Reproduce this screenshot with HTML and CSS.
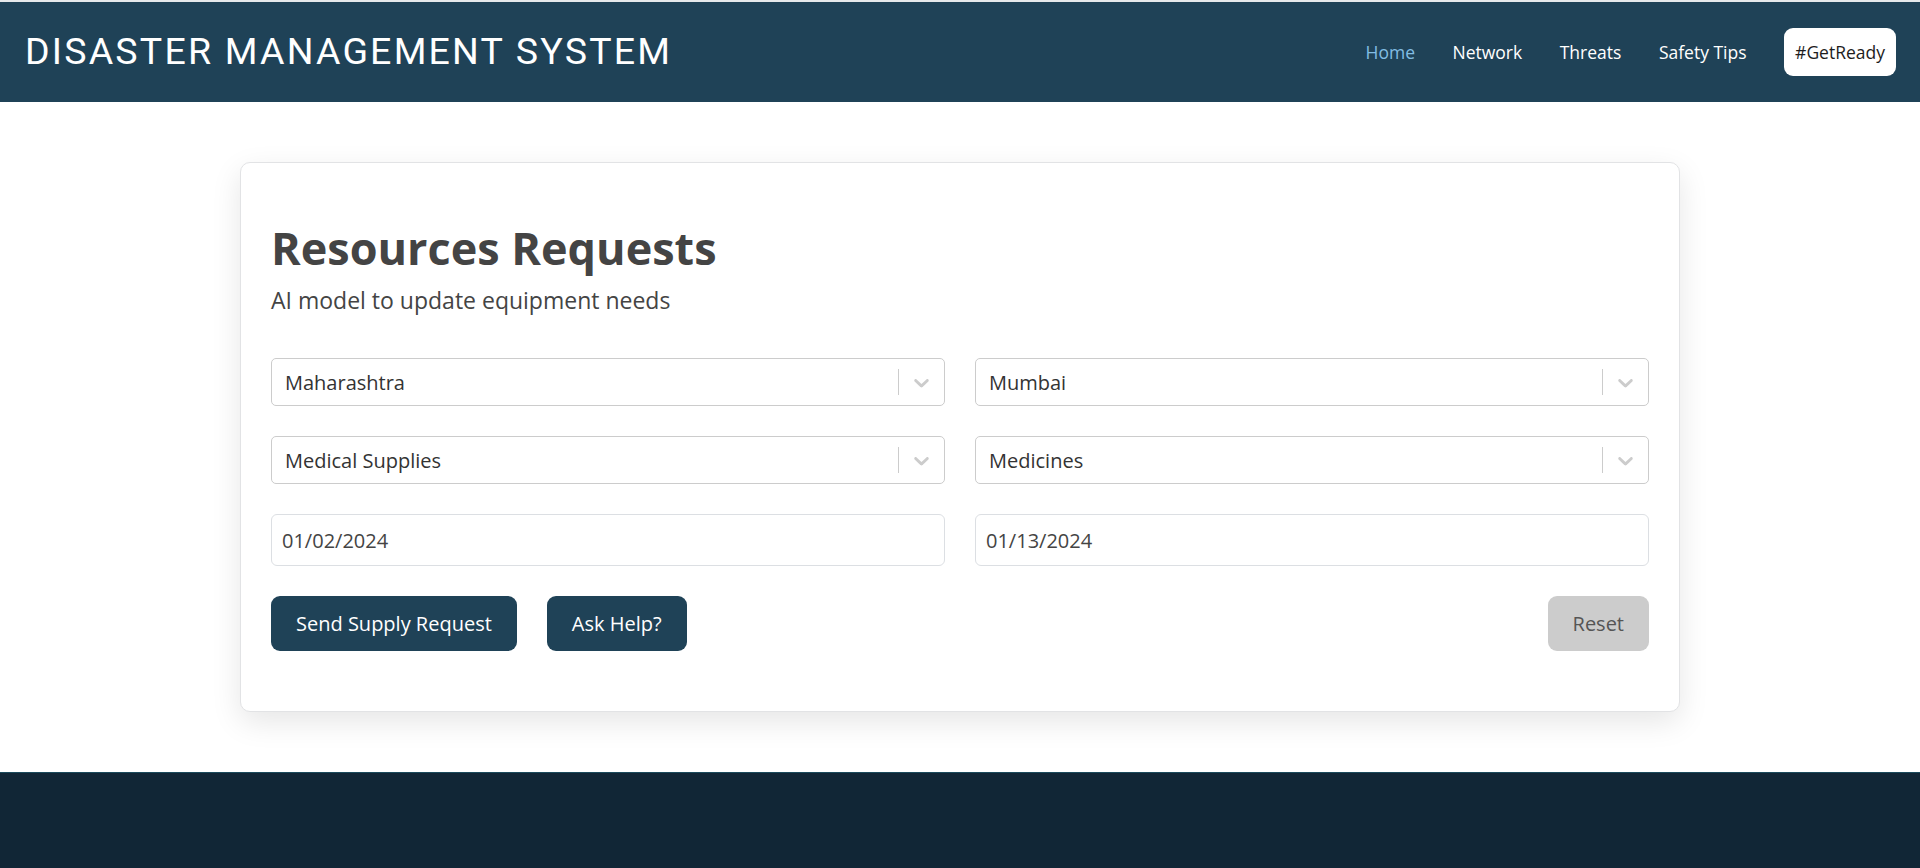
FILE: index.html
```html
<!DOCTYPE html>
<html lang="en">
<head>
<meta charset="utf-8">
<title>Disaster Management System</title>
<link rel="stylesheet" href="styles.css">
</head>
<body>
<header class="topbar">
  <div class="brand">DISASTER MANAGEMENT SYSTEM</div>
  <nav class="nav">
    <a class="nav-link active" href="#">Home</a>
    <a class="nav-link" href="#">Network</a>
    <a class="nav-link" href="#">Threats</a>
    <a class="nav-link" href="#">Safety Tips</a>
    <a class="nav-cta" href="#">#GetReady</a>
  </nav>
</header>

<main class="page">
  <section class="card">
    <h1 class="card-title">Resources Requests</h1>
    <p class="card-subtitle">AI model to update equipment needs</p>

    <div class="form-grid">
      <div class="select">
        <div class="select-value">Maharashtra</div>
        <div class="select-indicators">
          <span class="select-sep"></span>
          <span class="select-arrow"><svg viewBox="0 0 20 20" width="25" height="25"><path d="M4.516 7.548c0.436-0.446 1.043-0.481 1.576 0l3.908 3.747 3.908-3.747c0.533-0.481 1.141-0.446 1.574 0 0.436 0.445 0.408 1.197 0 1.615-0.406 0.418-4.695 4.502-4.695 4.502-0.217 0.223-0.502 0.335-0.787 0.335s-0.57-0.112-0.789-0.335c0 0-4.287-4.084-4.695-4.502s-0.436-1.17 0-1.615z"/></svg></span>
        </div>
      </div>
      <div class="select">
        <div class="select-value">Mumbai</div>
        <div class="select-indicators">
          <span class="select-sep"></span>
          <span class="select-arrow"><svg viewBox="0 0 20 20" width="25" height="25"><path d="M4.516 7.548c0.436-0.446 1.043-0.481 1.576 0l3.908 3.747 3.908-3.747c0.533-0.481 1.141-0.446 1.574 0 0.436 0.445 0.408 1.197 0 1.615-0.406 0.418-4.695 4.502-4.695 4.502-0.217 0.223-0.502 0.335-0.787 0.335s-0.57-0.112-0.789-0.335c0 0-4.287-4.084-4.695-4.502s-0.436-1.17 0-1.615z"/></svg></span>
        </div>
      </div>
      <div class="select">
        <div class="select-value">Medical Supplies</div>
        <div class="select-indicators">
          <span class="select-sep"></span>
          <span class="select-arrow"><svg viewBox="0 0 20 20" width="25" height="25"><path d="M4.516 7.548c0.436-0.446 1.043-0.481 1.576 0l3.908 3.747 3.908-3.747c0.533-0.481 1.141-0.446 1.574 0 0.436 0.445 0.408 1.197 0 1.615-0.406 0.418-4.695 4.502-4.695 4.502-0.217 0.223-0.502 0.335-0.787 0.335s-0.57-0.112-0.789-0.335c0 0-4.287-4.084-4.695-4.502s-0.436-1.17 0-1.615z"/></svg></span>
        </div>
      </div>
      <div class="select">
        <div class="select-value">Medicines</div>
        <div class="select-indicators">
          <span class="select-sep"></span>
          <span class="select-arrow"><svg viewBox="0 0 20 20" width="25" height="25"><path d="M4.516 7.548c0.436-0.446 1.043-0.481 1.576 0l3.908 3.747 3.908-3.747c0.533-0.481 1.141-0.446 1.574 0 0.436 0.445 0.408 1.197 0 1.615-0.406 0.418-4.695 4.502-4.695 4.502-0.217 0.223-0.502 0.335-0.787 0.335s-0.57-0.112-0.789-0.335c0 0-4.287-4.084-4.695-4.502s-0.436-1.17 0-1.615z"/></svg></span>
        </div>
      </div>
      <div class="date-input">01/02/2024</div>
      <div class="date-input">01/13/2024</div>
    </div>

    <div class="actions">
      <div class="actions-left">
        <button class="btn btn-primary">Send Supply Request</button>
        <button class="btn btn-primary">Ask Help?</button>
      </div>
      <button class="btn btn-reset">Reset</button>
    </div>
  </section>
</main>

<footer class="footer"></footer>
</body>
</html>
```

FILE: styles.css
```css
* { box-sizing: border-box; }

html, body {
  margin: 0;
  padding: 0;
  background: #ffffff;
  font-family: "Open Sans", "Noto Sans", sans-serif;
}

.topbar {
  height: 102px;
  border-top: 2px solid #e6e9eb;
  background: #1f4257;
  display: flex;
  align-items: center;
  justify-content: space-between;
  padding: 0 24px 0 25px;
}

.brand {
  font-family: Roboto, "Liberation Sans", sans-serif;
  font-size: 37.5px;
  font-weight: 400;
  letter-spacing: 2.2px;
  color: #ffffff;
  line-height: 1;
}

.nav {
  display: flex;
  align-items: center;
  gap: 37.5px;
}

.nav-link {
  font-size: 17.5px;
  color: #ffffff;
  text-decoration: none;
  line-height: 24px;
}

.nav-link.active { color: #82bde3; }

.nav-cta {
  font-size: 17.5px;
  line-height: 24px;
  color: #1d1d1d;
  background: #ffffff;
  text-decoration: none;
  padding: 12px 11px;
  border-radius: 9px;
}

.page {
  padding: 60px 0;
  display: flex;
  justify-content: center;
}

.card {
  width: 1440px;
  background: #ffffff;
  border: 1px solid #e2e3e5;
  border-radius: 10px;
  box-shadow: 0 10px 30px rgba(0, 0, 0, 0.10);
  padding: 54px 30px 60px;
}

.card-title {
  margin: 0;
  font-size: 45px;
  font-weight: 700;
  color: #444444;
  line-height: normal;
}

.card-subtitle {
  margin: 6px 0 0;
  font-size: 23px;
  font-weight: 500;
  color: #444444;
  line-height: normal;
}

.form-grid {
  margin-top: 42px;
  display: grid;
  grid-template-columns: 1fr 1fr;
  column-gap: 30px;
  row-gap: 30px;
}

.select {
  height: 48px;
  border: 1px solid #cccccc;
  border-radius: 5px;
  display: flex;
  align-items: center;
  background: #ffffff;
}

.select-value {
  flex: 1;
  padding-left: 13px;
  font-size: 20px;
  color: #333333;
}

.select-indicators {
  display: flex;
  align-items: stretch;
  align-self: stretch;
}

.select-sep {
  width: 1px;
  background: #cccccc;
  margin: 10px 0;
}

.select-arrow {
  display: flex;
  align-items: center;
  padding: 0 10px;
  fill: #cccccc;
}

.select-arrow svg { display: block; }

.date-input {
  height: 52px;
  border: 1px solid #dcdfe3;
  border-radius: 6px;
  padding: 0 10px;
  display: flex;
  align-items: center;
  font-size: 20px;
  color: #444444;
}

.actions {
  margin-top: 30px;
  display: flex;
  justify-content: space-between;
  align-items: center;
}

.actions-left {
  display: flex;
  gap: 30px;
}

.btn {
  font-family: "Open Sans", "Noto Sans", sans-serif;
  font-size: 20px;
  line-height: 30px;
  padding: 12.5px 25px;
  border: none;
  border-radius: 9px;
  cursor: pointer;
}

.btn-primary {
  background: #1f4257;
  color: #ffffff;
}

.btn-reset {
  background: #cccccc;
  color: #555555;
}

.footer {
  height: 96px;
  background: #112636;
  border-top: 1px solid #1b4a5c;
}
```
